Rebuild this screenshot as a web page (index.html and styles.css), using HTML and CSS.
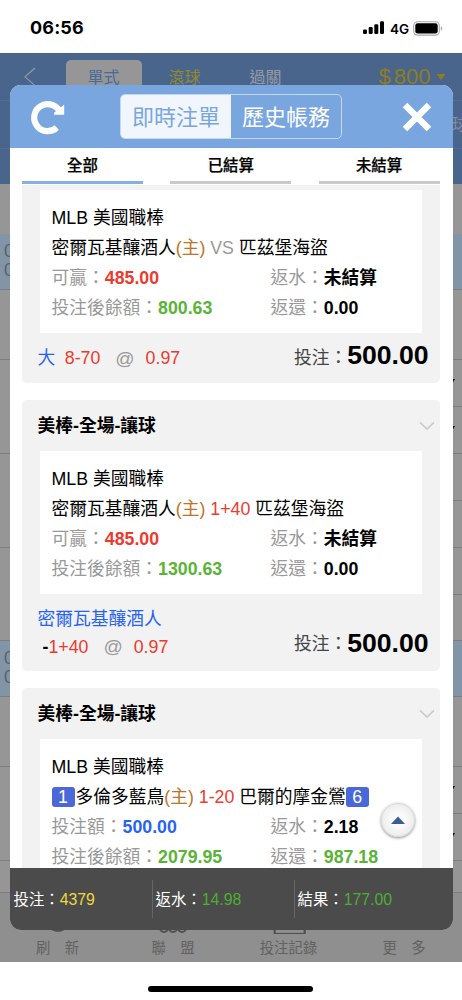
FILE: index.html
```html
<!DOCTYPE html>
<html lang="zh-TW">
<head>
<meta charset="utf-8">
<title>即時注單</title>
<link rel="stylesheet" href="styles.css">
</head>
<body>
<div class="phone">
  <div class="status">
    <span class="clock">06:56</span>
    <div class="status-right">
      <svg width="22" height="14" viewBox="0 0 22 14"><rect x="0" y="8.4" width="4" height="4.6" rx="1.2"/><rect x="5.7" y="6" width="4" height="7" rx="1.2"/><rect x="11.3" y="3.2" width="4" height="9.8" rx="1.2"/><rect x="17" y="0.3" width="4" height="12.7" rx="1.2"/></svg>
      <span class="net">4G</span>
      <svg width="30" height="15" viewBox="0 0 30 15"><rect x="0.7" y="0.7" width="25.6" height="13.4" rx="3.8" fill="none" stroke="#a8a8a8" stroke-width="1.1"/><rect x="2.3" y="2.3" width="22.4" height="10.2" rx="2.3"/><path d="M27.8 5.2v4.4c.9-.4 1.4-1.2 1.4-2.2s-.5-1.8-1.4-2.2z" fill="#a8a8a8"/></svg>
    </div>
  </div>

  <div class="page">
    <div class="page-head">
      <div class="page-nav">
        <svg class="back" width="14" height="20" viewBox="0 0 14 20"><path d="M12 1L2 9.8 12 18.6" fill="none" stroke="#929ba8" stroke-width="1.1"/></svg>
        <span class="nav-tab active">單式</span>
        <span class="nav-tab yellow">滾球</span>
        <span class="nav-tab">過關</span>
        <span class="money"><span>$</span>800<i class="caret"></i></span>
      </div>
      <div class="page-sub">球</div>
    </div>
    <div class="page-body">
      <div class="col">
        <div class="r h50"></div>
        <div class="r h56 blue">08<br>01</div>
        <div class="r h70"></div>
        <div class="r h94"></div>
        <div class="r h94"></div>
        <div class="r h93"></div>
        <div class="r h56 blue">08<br>01</div>
        <div class="r h70"></div>
        <div class="r h94"></div>
        <div class="r h32"></div>
      </div>
      <div class="col right">
        <div class="r h50"></div>
        <div class="r h56 blue"></div>
        <div class="r h70"></div>
        <div class="r h47"><i class="mark"></i></div>
        <div class="r h47"><i class="mark"></i></div>
        <div class="r h47"></div>
        <div class="r h47"></div>
        <div class="r h47"></div>
        <div class="r h46"></div>
        <div class="r h56 blue"></div>
        <div class="r h70"></div>
        <div class="r h47"><i class="mark"></i></div>
        <div class="r h47"><i class="mark"></i></div>
        <div class="r h32"></div>
      </div>
    </div>
    <div class="tabbar">
      <div class="tab"><svg width="34" height="34" viewBox="0 0 34 34"><circle cx="17" cy="21" r="9.3" fill="none" stroke="#505050" stroke-width="3"/></svg><span>刷　新</span></div>
      <div class="tab"><svg width="34" height="34" viewBox="0 0 34 34"><g fill="none" stroke="#505050" stroke-width="2"><circle cx="8" cy="28" r="4"/><circle cx="17" cy="28" r="4"/><circle cx="26" cy="28" r="4"/></g></svg><span>聯　盟</span></div>
      <div class="tab"><svg width="34" height="34" viewBox="0 0 34 34"><rect x="2.7" y="6" width="30" height="28" fill="none" stroke="#505050" stroke-width="2.2"/></svg><span>投注記錄</span></div>
      <div class="tab"><svg width="34" height="34"></svg><span>更　多</span></div>
    </div>
  </div>

  <div class="home"><i></i></div>

  <div class="modal">
    <div class="modal-head">
      <svg class="reload" width="36" height="36" viewBox="0 0 36 36"><path d="M26.8 28.6A13.5 13.5 0 1 1 29 11.3" fill="none" stroke="#fff" stroke-width="6.2"/><path d="M34.2 5.5V15.8H24V13.8z" fill="#fff"/></svg>
      <div class="switch"><span class="on">即時注單</span><span>歷史帳務</span></div>
      <svg class="close" width="30" height="30" viewBox="0 0 30 30"><path d="M3 3L27 27M27 3L3 27" stroke="#fff" stroke-width="6.4"/></svg>
    </div>
    <div class="filters">
      <span class="filter on">全部</span>
      <span class="filter">已結算</span>
      <span class="filter">未結算</span>
    </div>
    <div class="list">
      <div class="card first">
        <div class="box">
          <div>MLB 美國職棒</div>
          <div>密爾瓦基釀酒人<span class="host">(主)</span> <span class="vs">VS</span> 匹茲堡海盜</div>
          <div class="pair"><span>可贏：<b class="red">485.00</b></span><span>返水：<b>未結算</b></span></div>
          <div class="pair"><span>投注後餘額：<b class="green">800.63</b></span><span>返還：<b>0.00</b></span></div>
        </div>
        <div class="foot">
          <div class="pick"><span class="side">大</span><span class="odd">8-70</span><span class="at">@</span><span class="odd">0.97</span></div>
          <div class="bet">投注：<b>500.00</b></div>
        </div>
      </div>

      <div class="card">
        <div class="title"><span>美棒-全場-讓球</span><svg width="16" height="10" viewBox="0 0 16 10"><path d="M1 1.3L8 8 15 1.3" fill="none" stroke="#ccc" stroke-width="1.7"/></svg></div>
        <div class="box">
          <div>MLB 美國職棒</div>
          <div>密爾瓦基釀酒人<span class="host">(主)</span> <span class="odd">1+40</span> 匹茲堡海盜</div>
          <div class="pair"><span>可贏：<b class="red">485.00</b></span><span>返水：<b>未結算</b></span></div>
          <div class="pair"><span>投注後餘額：<b class="green">1300.63</b></span><span>返還：<b>0.00</b></span></div>
        </div>
        <div class="foot tall">
          <div><div class="side team">密爾瓦基釀酒人</div>
          <div class="pick second"><span class="odd"><b>-</b>1+40</span><span class="at">@</span><span class="odd">0.97</span></div></div>
          <div class="bet">投注：<b>500.00</b></div>
        </div>
      </div>

      <div class="card">
        <div class="title"><span>美棒-全場-讓球</span><svg width="16" height="10" viewBox="0 0 16 10"><path d="M1 1.3L8 8 15 1.3" fill="none" stroke="#ccc" stroke-width="1.7"/></svg></div>
        <div class="box">
          <div>MLB 美國職棒</div>
          <div><span class="badge">1</span>多倫多藍鳥<span class="host">(主)</span> <span class="odd">1-20</span> 巴爾的摩金鶯<span class="badge">6</span></div>
          <div class="pair"><span>投注額：<b class="blue-t">500.00</b></span><span>返水：<b>2.18</b></span></div>
          <div class="pair"><span>投注後餘額：<b class="green">2079.95</b></span><span>返還：<b class="green">987.18</b></span></div>
        </div>
      </div>
    </div>
    <div class="totals">
      <span>投注：<em class="y">4379</em></span>
      <span>返水：<em>14.98</em></span>
      <span>結果：<em>177.00</em></span>
    </div>
    <div class="to-top"><svg width="16" height="9" viewBox="0 0 16 9"><path d="M8 .5L15 8H1z" fill="#3a5c97"/></svg></div>
  </div>
</div>
</body>
</html>
```

FILE: styles.css
```css
* { box-sizing: border-box; }
body { margin: 0; background: #fff; font-family: "Liberation Sans", "Noto Sans CJK TC", sans-serif; }
i, em { font-style: normal; }
svg { display: block; flex: none; }

.phone { position: relative; width: 462px; height: 1000px; overflow: hidden; display: flex; flex-direction: column; }

/* status bar */
.status { height: 53px; flex: none; display: flex; justify-content: space-between; padding: 16px 19px 0 30px; }
.clock { font: 700 18px/24px Inter, sans-serif; letter-spacing: 0.15px; }
.status-right { display: flex; align-items: center; height: 24px; }
.net { font: 600 13.5px/24px Inter, sans-serif; margin: 1px 4px 0 5px; }
.status-right svg:first-child { margin-right: 0; }

/* dimmed page behind the dialog */
.page { height: 909px; flex: none; display: flex; flex-direction: column; background: #969696; overflow: hidden; }
.page-head { height: 131px; flex: none; background: #4a658c; }
.page-nav { height: 48px; border-bottom: 1px solid #536d93; display: flex; padding: 7px 0 0 23px; }
.back { margin: 7px 28.5px 0 0; }
.nav-tab { width: 76px; height: 40px; font-size: 16px; line-height: 36px; text-align: center; color: #969ca5; margin-right: 5px; }
.nav-tab.active { background: #969696; color: #4a6a9a; border-radius: 5px 5px 0 0; }
.nav-tab.yellow { color: #928a2a; }
.money { display: flex; font-size: 22px; line-height: 34px; color: #8f7d1b; margin-left: 70px; }
.money span { margin-right: 3px; }
.caret { margin: 14px 0 0 6px; width: 9px; height: 6px; background: #8f7d1b; clip-path: polygon(0 0, 100% 0, 50% 100%); }
.page-sub { height: 48px; border-bottom: 1px solid #536d93; text-align: right; font-size: 16px; line-height: 48px; color: #858d99; margin-right: -6px; }
.page-body { display: flex; flex: none; height: 709px; }
.col { width: 231px; }
.r { border-bottom: 1px solid #7d7d7d; padding-left: 4px; color: #5c6268; font-size: 17.7px; line-height: 19px; padding-top: 8px; }
.r.blue { background: #8294a7; }
.h50 { height: 50px; border-bottom: 0; } .h56 { height: 56px; } .h70 { height: 70px; } .h94 { height: 94px; }
.h93 { height: 93px; } .h47 { height: 47px; } .h46 { height: 46px; } .h32 { height: 32px; }
.right .r { display: flex; justify-content: flex-end; padding-right: 7px; }
.mark { margin-top: 11px; width: 12px; height: 6px; background: #111; clip-path: polygon(0 0, 100% 0, 70% 100%); }
.tabbar { flex: 1; background: #8f8f8f; display: grid; grid-template-columns: 115px 116px 115px 116px; padding-top: 7px; }
.tab { display: flex; flex-direction: column; align-items: center; gap: 4px; font-size: 14.4px; line-height: 20px; color: #616161; }

.home { flex: none; height: 38px; display: flex; justify-content: center; padding-top: 24px; }
.home i { width: 165px; height: 6px; border-radius: 3px; background: #000; margin-right: 1px; }

/* dialog */
.modal { position: absolute; left: 9.5px; top: 85px; width: 443.5px; height: 845px; border-radius: 11px; overflow: hidden; background: #fff; display: flex; flex-direction: column; }
.modal-head { height: 63px; flex: none; background: #79a6df; display: flex; align-items: center; padding: 0 21px 0 20px; }
.switch { display: flex; width: 222px; height: 45px; border: 1px solid #c3d8f3; border-radius: 5px; overflow: hidden; font-size: 22px; line-height: 46px; color: #fff; margin: 0 auto 0 54.5px; }
.switch span { flex: 1; text-align: center; }
.switch .on { background: #f1f6fd; color: #79a6df; }
.filters { height: 36px; flex: none; display: flex; justify-content: space-between; padding: 0 13.5px 0 12.5px; }
.filter { width: 121px; border-bottom: 3px solid #c9c9c9; text-align: center; font-weight: 500; font-size: 15.4px; line-height: 36px; color: #000; -webkit-text-stroke: 0.25px #000; }
.filter.on { border-bottom-color: #85b0e6; }
.list { flex: 1; min-height: 0; overflow: hidden; padding: 1px 13px 0 12.5px; display: flex; flex-direction: column; gap: 17px; }
.card { flex: none; background: #f2f2f2; border-radius: 5px; font-size: 17.76px; color: #000; }
.card.first { padding-top: 5px; border-radius: 0 0 5px 5px; }
.title { height: 51px; display: flex; align-items: center; justify-content: space-between; padding: 0 5px 0 15.5px; font-weight: 700; }
.title span { margin-top: -3px; }
.box { margin: 0 18px; height: 143px; background: #fff; padding: 13px 0 0 11.5px; line-height: 30.1px; white-space: nowrap; }
.pair { display: grid; grid-template-columns: 219px 1fr; color: #999; }
.pair b { color: #000; }
.pair .red { color: #ec3a2e; }
.pair .green { color: #59b436; }
.pair .blue-t { color: #2863f0; }
.host { color: #bd7427; }
.vs, .at { color: #999; }
.odd { color: #ec3a2e; }
.odd b { color: #000; }
.side { color: #2863f0; }
.foot { height: 50px; display: flex; justify-content: space-between; padding: 0 11.5px 0 15.5px; line-height: 51px; }
.pick { display: flex; }
.side + .odd { margin-left: 9.5px; }
.at { margin: 0 11px 0 15px; font-size: 19px; }
.foot.tall { height: 77px; line-height: 28px; padding-top: 11px; }
.second { padding-left: 5px; }
.tall .bet { line-height: 78px; }
.bet { color: #444; display: flex; }
.bet b { color: #000; font-size: 26.6px; }
.first .bet b { margin-top: -3px; }
.tall .bet b { margin-top: -1px; }
.badge { display: inline-block; width: 23px; height: 20px; border-radius: 3px; background: #4b68d8; color: #fff; line-height: 20px; text-align: center; margin-right: 1px; }
.totals { height: 62px; flex: none; background: #4b4b4b; color: #fff; font-size: 15.4px; line-height: 63px; display: grid; grid-template-columns: 142px 142px 1fr; }
.totals span { padding-left: 4px; background: linear-gradient(#666, #666) left 12px / 1px 38px no-repeat; }
.totals span:first-child { background: none; }
.totals em { color: #4eae31; font-size: 15.8px; }
.totals .y { color: #efd83c; }
.to-top { position: absolute; left: 371px; top: 718px; width: 34px; height: 34px; border-radius: 50%; background: radial-gradient(#fafafa 30%, #e4e4e4); border: 1px solid #d8d8d8; box-shadow: 0 1px 3px rgba(0,0,0,.45); display: flex; align-items: center; justify-content: center; }
```
